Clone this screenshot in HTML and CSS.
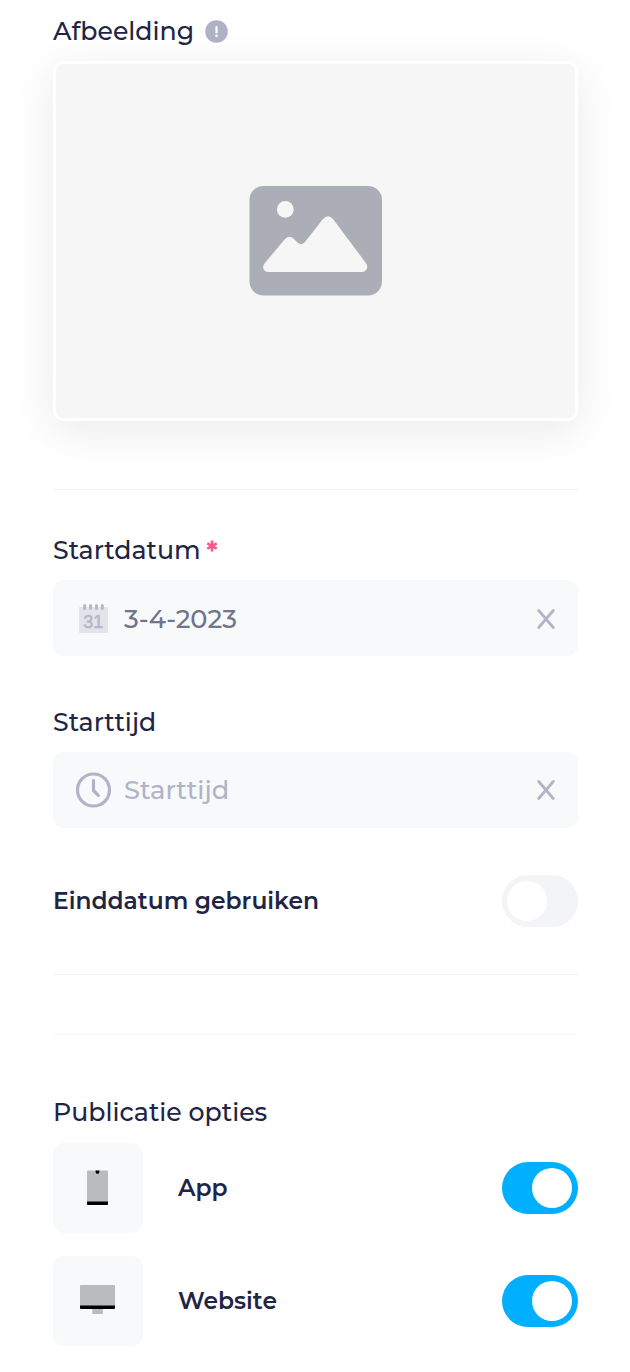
FILE: index.html
```html
<!DOCTYPE html>
<html lang="nl">
<head>
    <meta charset="UTF-8">
    <meta name="viewport" content="width=device-width, initial-scale=1.0">
    <title>Afbeelding en publicatie</title>

    <link rel="stylesheet" href="styles.css">
</head>
<body>

    <form class="form">
        <!-- Afbeelding -->
        <div class="label">
            <span>Afbeelding</span>
            <svg class="info" viewBox="0 0 23 23">
                <circle cx="11.5" cy="11.5" r="11.3" fill="#aeb2c4"/>
                <path d="M11.5 7v5.4" stroke="#fff" stroke-width="2.2" stroke-linecap="round"/>
                <circle cx="11.5" cy="15.8" r="1.3" fill="#fff"/>
            </svg>
        </div>
        <div class="preview">
            <svg width="134" height="111" viewBox="0 0 134 111">
                <rect x="0.5" y="1" width="132.5" height="109.5" rx="14" fill="#abaeb6"/>
                <circle cx="36.3" cy="24.4" r="8.4" fill="#f6f6f6"/>
                <path d="M15.5 78.5 35.5 54.5Q40 49.5 44.5 53.5L48.5 57.5Q52.5 61 56 57L74 34Q79 28.5 84 34L116.5 77.5Q120 82.500 116.5 85.5Q115 87 112.5 87H19.5Q16.5 87 15 85Q13 81.5 15.5 78.5Z" fill="#f6f6f6"/>
            </svg>
        </div>

        <hr class="line">

        <!-- Startdatum en starttijd -->
        <div class="label label-date">
            <span>Startdatum</span>
            <svg class="required" viewBox="0 0 12 12">
                <path d="M6 0.6v10.8M1.3 3.3l9.4 5.4M10.7 3.3l-9.4 5.4" stroke="#f8588a" stroke-width="2.5"/>
            </svg>
        </div>
        <div class="field">
            <svg class="icon" viewBox="0 0 36 36">
                <rect x="3" y="7" width="29" height="26" rx="1" fill="#e2e4ea"/>
                <path d="M8.7 5.5v3M14.6 5.5v3M20.5 5.5v3M26.3 5.5v3" stroke="#b5b8c8" stroke-width="3" stroke-linecap="round"/>
                <text class="day" x="17.3" y="27.6" text-anchor="middle">31</text>
            </svg>
            <span class="value value-date">3-4-2023</span>
            <svg class="clear clear-date" viewBox="0 0 18 20">
                <path d="M1.7 1.5 16.3 18.5M16.3 1.5 1.7 18.5" stroke="#b0b4c6" stroke-width="2.7" stroke-linecap="round"/>
            </svg>
        </div>

        <div class="label label-time">
            <span>Starttijd</span>
        </div>
        <div class="field">
            <svg class="icon" viewBox="0 0 36 36">
                <circle cx="17.5" cy="18" r="16" fill="none" stroke="#b0b4c6" stroke-width="3.2"/>
                <path d="M17.5 8.5v10l4.8 4.8" fill="none" stroke="#b0b4c6" stroke-width="3.2" stroke-linecap="round"/>
            </svg>
            <span class="value placeholder">Starttijd</span>
            <svg class="clear" viewBox="0 0 18 20">
                <path d="M1.7 1.5 16.3 18.5M16.3 1.5 1.7 18.5" stroke="#b0b4c6" stroke-width="2.7" stroke-linecap="round"/>
            </svg>
        </div>

        <div class="row row-end">
            <span class="name">Einddatum gebruiken</span>
            <span class="toggle"></span>
        </div>

        <hr class="line">
        <hr class="line line-second">

        <!-- Publicatie opties -->
        <div class="label label-options">
            <span>Publicatie opties</span>
        </div>
        <div class="row option">
            <span class="tile">
                <svg width="21" height="35" viewBox="0 0 21 35">
                    <rect y="0.4" width="21" height="34.6" rx="1" fill="#b9bbbd"/>
                    <path d="M0 31.4h21v2.500q0 1-1 1H1q-1 0-1-1z" fill="#000"/>
                    <path d="M8.6 0.4h3.8v1.5a1.9 1.9 0 0 1-3.8 0z" fill="#000"/>
                </svg>
            </span>
            <span class="name">App</span>
            <span class="toggle on"></span>
        </div>
        <div class="row option">
            <span class="tile tile-website">
                <svg width="35" height="29" viewBox="0 0 35 29">
                    <rect width="35" height="23" rx="1" fill="#b9bbbd"/>
                    <path d="M0 20.500h35v2.500q0 1-1 1H1q-1 0-1-1z" fill="#000"/>
                    <rect x="12.300" y="24" width="10.500" height="5" fill="#b9bbbd"/>
                </svg>
            </span>
            <span class="name">Website</span>
            <span class="toggle on"></span>
        </div>
    </form>

</body>
</html>
```

FILE: styles.css
```css
body {
    margin: 0;
    padding: 0;
    background: #fff;
    font-family: Montserrat, 'Inter', sans-serif;
    color: #1f2544;
}

svg {
    display: block;
    flex: none;
}

.form {
    padding: 15px 52px 26px 53px;
}

.label {
    display: flex;
    align-items: center;
    height: 32px;
    margin-bottom: 14px;
    font-size: 25.2px;
    line-height: 32px;
    font-weight: 500;
    white-space: nowrap;
}

.label-date {
    margin-top: 44px;
}

.label-time {
    margin-top: 50px;
}

.label-options {
    margin-top: 61px;
    margin-bottom: 15px;
}

.info {
    width: 23px;
    height: 23px;
    margin-left: 11px;
}

.required {
    width: 12px;
    height: 12px;
    margin: 0 0 9px 5px;
}

.preview {
    display: flex;
    align-items: center;
    justify-content: center;
    height: 360px;
    padding-bottom: 1px;
    box-sizing: border-box;
    border: 3px solid #fff;
    border-radius: 10px;
    background: #f6f6f6;
    box-shadow: 0 10px 45px rgba(0, 0, 0, 0.085);
}

.line {
    height: 1px;
    margin: 68px 0 0;
    border: 0;
    background: #f3f3f5;
}

.field {
    display: flex;
    align-items: center;
    height: 76px;
    padding: 0 23px;
    box-sizing: border-box;
    border-radius: 11px;
    background: #f7f9fb;
}

.icon {
    width: 36px;
    height: 36px;
}

.day {
    font-family: 'Liberation Sans', sans-serif;
    font-size: 18px;
    fill: #b5b8c8;
    stroke: #b5b8c8;
    stroke-width: 0.6px;
}

.value {
    flex: 1;
    margin-left: 12px;
    font-size: 25.7px;
    line-height: 32px;
    font-weight: 500;
    color: #70748c;
}

.value-date {
    margin-top: 2px;
}

.placeholder {
    color: #b0b4c6;
}

.clear {
    width: 18px;
    height: 20px;
}

.clear-date {
    margin-top: 2px;
}

.row {
    display: flex;
    align-items: center;
}

.row-end {
    margin-top: 47px;
}

.row-end + .line {
    margin-top: 47px;
}

.line-second {
    margin-top: 59px;
    background: #f8f8f9;
}

.name {
    flex: 1;
    font-size: 23.4px;
    line-height: 30px;
    font-weight: 600;
    white-space: nowrap;
}

.option + .option {
    margin-top: 23px;
}

.tile {
    display: flex;
    align-items: center;
    justify-content: center;
    width: 90px;
    height: 90px;
    padding: 0 2px 2px 0;
    margin-right: 35px;
    box-sizing: border-box;
    border-radius: 11px;
    background: #f7f9fb;
}

.tile-website {
    padding-bottom: 4px;
}

.toggle {
    display: flex;
    width: 76px;
    height: 52px;
    padding: 6px 6px 6px 5px;
    box-sizing: border-box;
    border-radius: 26px;
    background: #f2f4f8;
}

.toggle::before {
    content: '';
    width: 40px;
    height: 40px;
    border-radius: 50%;
    background: #fff;
}

.toggle.on {
    justify-content: flex-end;
    background: #00b0ff;
}
```
